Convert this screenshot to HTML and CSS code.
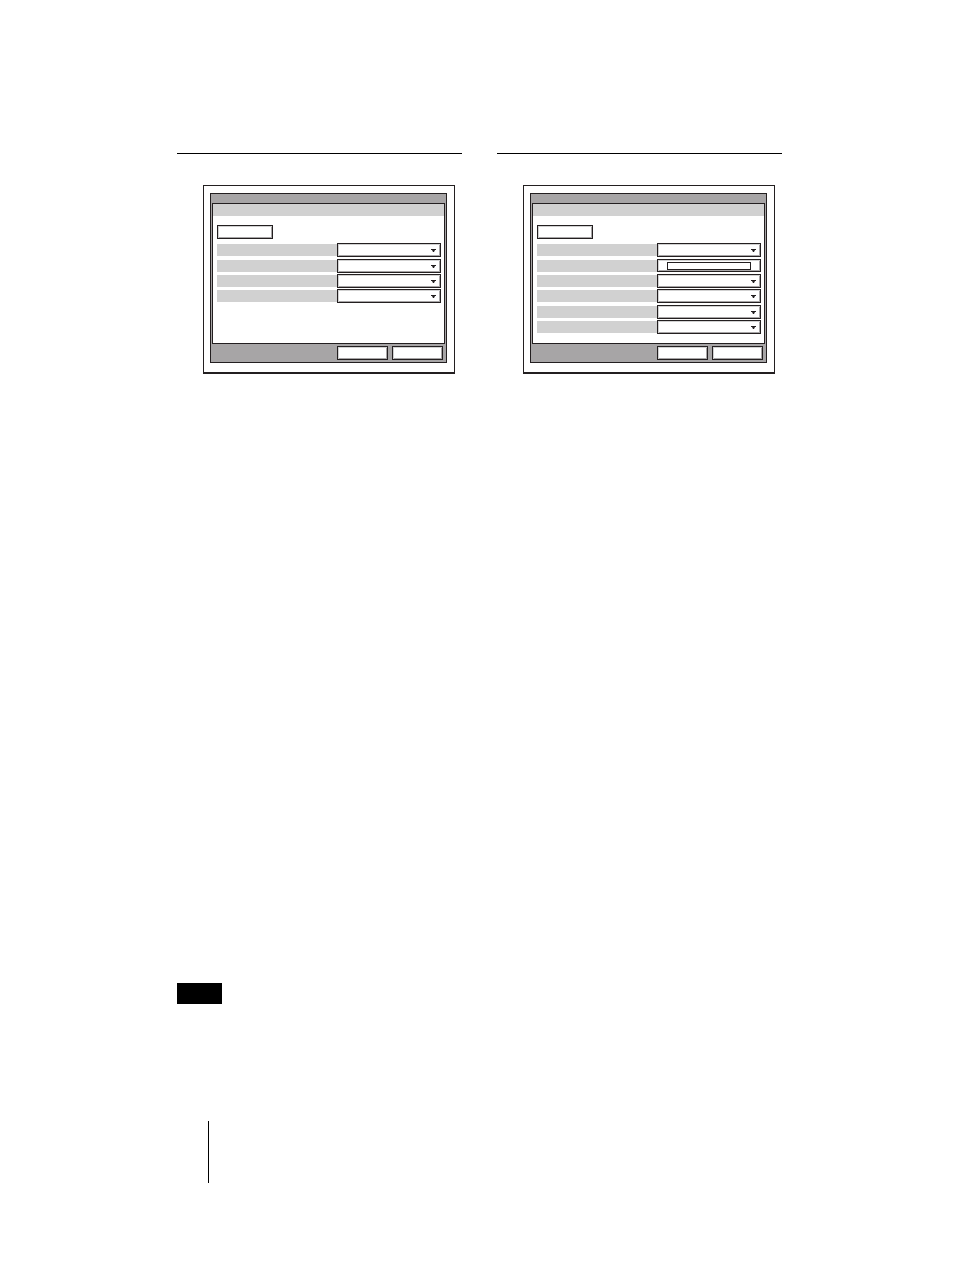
FILE: index.html
```
<!DOCTYPE html>
<html lang="en">
<head>
  <meta charset="UTF-8">
  <meta name="viewport" content="width=device-width, initial-scale=1.0">
  <title>Setup Menus</title>
  <link rel="stylesheet" href="styles.css">
</head>
<body>
  <main class="columns">
    <section class="column">
      <div class="screen">
        <div class="window">
          <div class="panel">
            <div class="panel-header"></div>
            <button class="btn tab" type="button" aria-label="Menu"></button>
            <div class="row">
              <label for="a1"></label>
              <span class="field"><select id="a1" aria-label="Setting 1"></select><svg viewBox="0 0 5 3"><path d="M0 0h5v1H4L3 3H2L1 1H0z"/></svg></span>
            </div>
            <div class="row">
              <label for="a2"></label>
              <span class="field"><select id="a2" aria-label="Setting 2"></select><svg viewBox="0 0 5 3"><path d="M0 0h5v1H4L3 3H2L1 1H0z"/></svg></span>
            </div>
            <div class="row">
              <label for="a3"></label>
              <span class="field"><select id="a3" aria-label="Setting 3"></select><svg viewBox="0 0 5 3"><path d="M0 0h5v1H4L3 3H2L1 1H0z"/></svg></span>
            </div>
            <div class="row">
              <label for="a4"></label>
              <span class="field"><select id="a4" aria-label="Setting 4"></select><svg viewBox="0 0 5 3"><path d="M0 0h5v1H4L3 3H2L1 1H0z"/></svg></span>
            </div>
          </div>
          <div class="actions">
            <button class="btn" type="button" aria-label="OK"></button>
            <button class="btn" type="button" aria-label="Cancel"></button>
          </div>
        </div>
      </div>
    </section>

    <section class="column">
      <div class="screen">
        <div class="window">
          <div class="panel">
            <div class="panel-header"></div>
            <button class="btn tab" type="button" aria-label="Menu"></button>
            <div class="row">
              <label for="b1"></label>
              <span class="field"><select id="b1" aria-label="Setting 1"></select><svg viewBox="0 0 5 3"><path d="M0 0h5v1H4L3 3H2L1 1H0z"/></svg></span>
            </div>
            <div class="row">
              <label for="b2"></label>
              <span class="field text-field"><input id="b2" type="text" aria-label="Setting 2"></span>
            </div>
            <div class="row">
              <label for="b3"></label>
              <span class="field"><select id="b3" aria-label="Setting 3"></select><svg viewBox="0 0 5 3"><path d="M0 0h5v1H4L3 3H2L1 1H0z"/></svg></span>
            </div>
            <div class="row">
              <label for="b4"></label>
              <span class="field"><select id="b4" aria-label="Setting 4"></select><svg viewBox="0 0 5 3"><path d="M0 0h5v1H4L3 3H2L1 1H0z"/></svg></span>
            </div>
            <div class="row">
              <label for="b5"></label>
              <span class="field"><select id="b5" aria-label="Setting 5"></select><svg viewBox="0 0 5 3"><path d="M0 0h5v1H4L3 3H2L1 1H0z"/></svg></span>
            </div>
            <div class="row">
              <label for="b6"></label>
              <span class="field"><select id="b6" aria-label="Setting 6"></select><svg viewBox="0 0 5 3"><path d="M0 0h5v1H4L3 3H2L1 1H0z"/></svg></span>
            </div>
          </div>
          <div class="actions">
            <button class="btn" type="button" aria-label="OK"></button>
            <button class="btn" type="button" aria-label="Cancel"></button>
          </div>
        </div>
      </div>
    </section>
  </main>

  <footer class="page-footer">
    <div class="page-tab"></div>
    <div class="page-line"></div>
  </footer>
</body>
</html>
```

FILE: styles.css
```
* {
  box-sizing: border-box;
}

body {
  display: flex;
  flex-direction: column;
  min-height: 100vh;
  margin: 0;
  padding: 153px 172px 86px 177px;
  background: #fff;
  font-family: "Liberation Sans", Arial, sans-serif;
}

.columns {
  display: grid;
  grid-template-columns: 1fr 1fr;
  gap: 35px;
}

.column {
  border-top: 1px solid #000;
  padding: 31px 7px 0 26px;
}

.screen {
  border: 1px solid #231f20;
  border-bottom-width: 2px;
  padding: 7px 7px 9px 6px;
}

/* grey window frame around the white panel */
.window {
  border: 1px solid #231f20;
  padding: 9px 1px 0;
  background: #a7a5a6;
}

.panel {
  min-height: 141px;
  border: 1px solid #231f20;
  padding: 0 3px 9px 4px;
  background: #fff;
}

.panel-header {
  height: 12px;
  margin: 0 -3px 9px -4px;
  background: #d1d1d1;
}

.btn {
  display: block;
  width: 51px;
  height: 14px;
  border: 1px solid #231f20;
  border-radius: 0;
  padding: 0;
  background: #fff;
  box-shadow: inset 1px 1px #d1d1d1, inset -1px -1px #a7a5a6;
}

.tab {
  width: 56px;
  margin-bottom: 4px;
}

.row {
  display: grid;
  grid-template-columns: 120fr 104fr;
  align-items: start;
  height: 14px;
  margin-top: 1px;
}

.row:nth-of-type(3n) {
  margin-top: 2px;
}

.row label {
  height: 12px;
  margin-top: 1px;
  background: #d1d1d1;
}

.field {
  display: flex;
  position: relative;
  height: 14px;
}

.field select,
.text-field {
  border: 1px solid #231f20;
  border-radius: 0;
  padding: 0;
  background: #fff;
  box-shadow: inset 1px 1px #d1d1d1, inset -1px -1px #a7a5a6;
}

.field select {
  appearance: none;
  width: 100%;
  height: 14px;
}

.field svg {
  position: absolute;
  top: 6px;
  right: 5px;
  width: 5px;
  height: 3px;
  fill: #231f20;
  pointer-events: none;
}

.text-field {
  height: 13px;
  padding: 2px 9px;
}

.text-field input {
  width: 100%;
  min-width: 0;
  height: 8px;
  border: 1px solid #231f20;
  padding: 0;
  font-size: 6px;
}

.actions {
  display: flex;
  justify-content: flex-end;
  gap: 4px;
  padding: 2px 2px;
}

.page-footer {
  margin-top: auto;
}

.page-tab {
  width: 45px;
  height: 21px;
  background: #000;
}

.page-line {
  height: 62px;
  margin: 117px 0 0 31px;
  border-left: 1px solid #000;
}
```
